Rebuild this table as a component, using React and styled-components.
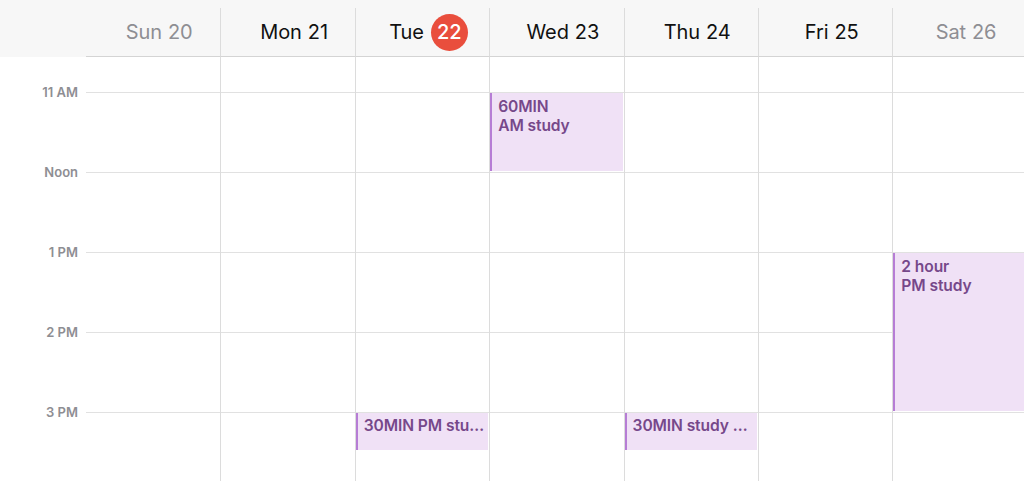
import React from "react";
import styled, { createGlobalStyle } from "styled-components";

const HOUR = 80;
const FIRST_LINE = 35;

const days = [
  { id: "sun", name: "Sun", date: 20, weekend: true },
  { id: "mon", name: "Mon", date: 21 },
  { id: "tue", name: "Tue", date: 22, today: true },
  { id: "wed", name: "Wed", date: 23 },
  { id: "thu", name: "Thu", date: 24 },
  { id: "fri", name: "Fri", date: 25 },
  { id: "sat", name: "Sat", date: 26, weekend: true },
];

const hours = ["11 AM", "Noon", "1 PM", "2 PM", "3 PM"];

// start is hours after 11 AM, length in hours
const events = [
  { id: 1, day: "wed", start: 0, length: 1, lines: ["60MIN", "AM study"] },
  { id: 2, day: "sat", start: 2, length: 2, lines: ["2 hour", "PM study"] },
  { id: 3, day: "tue", start: 4, length: 0.5, lines: ["30MIN PM study"], single: true },
  { id: 4, day: "thu", start: 4, length: 0.5, lines: ["30MIN study session"], single: true },
];

const GlobalStyle = createGlobalStyle`
  html, body {
    margin: 0;
    padding: 0;
    background: #fff;
    font-family: Inter, "Noto Sans", sans-serif;
    -webkit-font-smoothing: antialiased;
  }
`;

const Calendar = () => {
  return (
    <Wrapper>
      <GlobalStyle />
      <Header>
        <span />
        {days.map((d, i) => (
          <DayHead key={d.id} $first={i === 0}>
            <DayLabel $weekend={d.weekend}>
              {d.name}
              {d.today ? <Today>{d.date}</Today> : <span>{d.date}</span>}
            </DayLabel>
          </DayHead>
        ))}
      </Header>
      <Body>
        <Gutter>
          {hours.map((h) => (
            <HourLabel key={h}>{h}</HourLabel>
          ))}
        </Gutter>
        {days.map((d, i) => (
          <DayColumn key={d.id} $first={i === 0}>
            {events
              .filter((e) => e.day === d.id)
              .map((e) => (
                <Event
                  key={e.id}
                  $single={e.single}
                  style={{
                    top: FIRST_LINE + 1 + e.start * HOUR,
                    height: e.length * HOUR - (e.single ? 3 : 2),
                  }}
                >
                  {e.lines.map((l) => (
                    <EventLine key={l}>{l}</EventLine>
                  ))}
                </Event>
              ))}
          </DayColumn>
        ))}
      </Body>
    </Wrapper>
  );
};

const Wrapper = styled.main`
  width: 1024px;
  height: 481px;
  overflow: hidden;
  display: flex;
  flex-direction: column;
`;

const Header = styled.header`
  display: grid;
  grid-template-columns: 86px repeat(7, 134.4px);
  height: 57px;
  background: #f7f7f7;
  flex-shrink: 0;
`;

const DayHead = styled.div`
  margin-top: 8px;
  border-left: ${(p) => (p.$first ? "none" : "1px solid #dcdcdc")};
  border-bottom: 1px solid #d4d4d4;
  display: flex;
  align-items: center;
  justify-content: center;
  padding-left: 12px;
`;

const DayLabel = styled.div`
  display: flex;
  align-items: center;
  gap: 6px;
  font-size: 20px;
  color: ${(p) => (p.$weekend ? "#8e8e93" : "#111")};
  letter-spacing: -0.1px;
`;

const Today = styled.span`
  display: inline-flex;
  align-items: center;
  justify-content: center;
  width: 37px;
  height: 37px;
  border-radius: 50%;
  background: #e94e3d;
  color: #fff;
  font-weight: 500;
  margin-left: 1px;
`;

const Body = styled.section`
  flex: 1;
  display: grid;
  grid-template-columns: 86px repeat(7, 134.4px);
  background-image: linear-gradient(to bottom, #e1e1e1 0 1px, transparent 1px ${HOUR}px);
  background-size: calc(100% - 86px) ${HOUR}px;
  background-position: 86px ${FIRST_LINE}px;
  background-repeat: repeat-y;
`;

const Gutter = styled.div`
  display: flex;
  flex-direction: column;
  padding-top: ${FIRST_LINE - 8}px;
  padding-right: 8px;
  background: #fff;
`;

const HourLabel = styled.div`
  height: ${HOUR}px;
  line-height: 17px;
  font-size: 13px;
  font-weight: 600;
  color: #8e8e93;
  text-align: right;
`;

const DayColumn = styled.div`
  position: relative;
  border-left: ${(p) => (p.$first ? "none" : "1px solid #dcdcdc")};
`;

const Event = styled.div`
  position: absolute;
  left: 0;
  right: 1px;
  box-sizing: border-box;
  background: #f0e1f6;
  border-left: 2px solid #b67dd5;
  padding: ${(p) => (p.$single ? "3px 4px 0 6px" : "4px 4px 0 6px")};
  color: #76488a;
  overflow: hidden;
`;

const EventLine = styled.div`
  font-size: 15.6px;
  font-weight: 600;
  line-height: 19px;
  letter-spacing: -0.1px;
  white-space: nowrap;
  overflow: hidden;
  text-overflow: ellipsis;
`;

export default Calendar;
